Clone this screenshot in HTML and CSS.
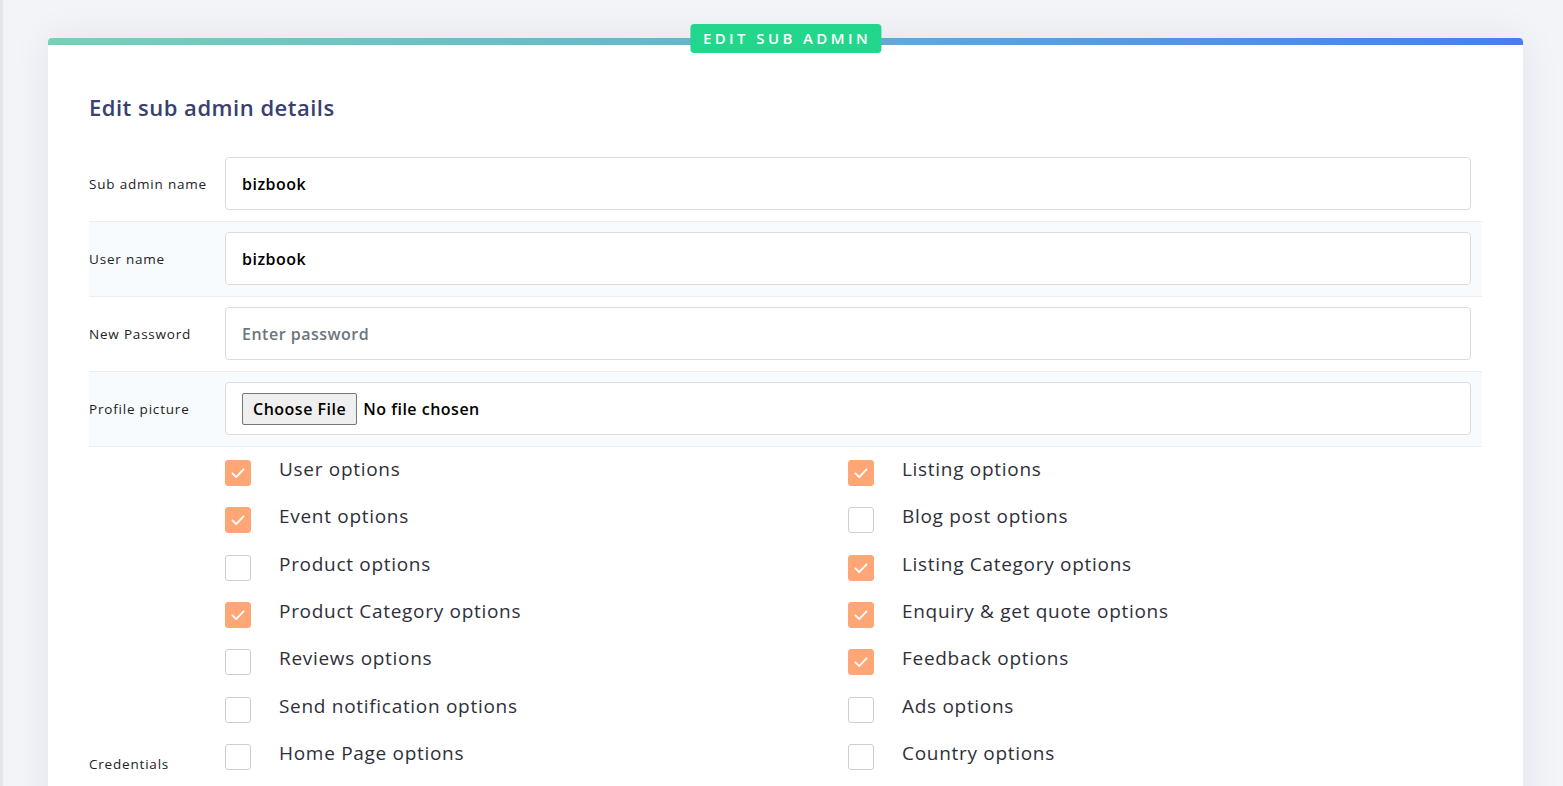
FILE: index.html
```html
<!DOCTYPE html>
<html lang="en">
<head>
<meta charset="utf-8">
<title>Edit sub admin</title>
<link rel="stylesheet" href="styles.css">
</head>
<body>
<div class="page">
  <div class="card">
    <div class="card-bar"></div>
    <span class="badge">EDIT SUB ADMIN</span>
    <div class="card-body">
      <h2 class="title">Edit sub admin details</h2>
      <div class="form">
        <div class="row">
          <div class="label">Sub admin name</div>
          <div class="field"><input class="input" type="text" value="bizbook"></div>
        </div>
        <div class="row alt">
          <div class="label">User name</div>
          <div class="field"><input class="input" type="text" value="bizbook"></div>
        </div>
        <div class="row">
          <div class="label">New Password</div>
          <div class="field"><input class="input" type="password" placeholder="Enter password"></div>
        </div>
        <div class="row alt">
          <div class="label">Profile picture</div>
          <div class="field"><div class="input file-box"><input class="file" type="file"></div></div>
        </div>
        <div class="row cred">
          <div class="label">Credentials</div>
          <div class="options">
            <div class="opt"><span class="box on"><svg viewBox="0 0 26 26"><path d="M7 13.5l4 4 8-8.5"/></svg></span><span class="opt-text">User options</span></div>
            <div class="opt"><span class="box on"><svg viewBox="0 0 26 26"><path d="M7 13.5l4 4 8-8.5"/></svg></span><span class="opt-text">Listing options</span></div>
            <div class="opt"><span class="box on"><svg viewBox="0 0 26 26"><path d="M7 13.5l4 4 8-8.5"/></svg></span><span class="opt-text">Event options</span></div>
            <div class="opt"><span class="box"></span><span class="opt-text">Blog post options</span></div>
            <div class="opt"><span class="box"></span><span class="opt-text">Product options</span></div>
            <div class="opt"><span class="box on"><svg viewBox="0 0 26 26"><path d="M7 13.5l4 4 8-8.5"/></svg></span><span class="opt-text">Listing Category options</span></div>
            <div class="opt"><span class="box on"><svg viewBox="0 0 26 26"><path d="M7 13.5l4 4 8-8.5"/></svg></span><span class="opt-text">Product Category options</span></div>
            <div class="opt"><span class="box on"><svg viewBox="0 0 26 26"><path d="M7 13.5l4 4 8-8.5"/></svg></span><span class="opt-text">Enquiry &amp; get quote options</span></div>
            <div class="opt"><span class="box"></span><span class="opt-text">Reviews options</span></div>
            <div class="opt"><span class="box on"><svg viewBox="0 0 26 26"><path d="M7 13.5l4 4 8-8.5"/></svg></span><span class="opt-text">Feedback options</span></div>
            <div class="opt"><span class="box"></span><span class="opt-text">Send notification options</span></div>
            <div class="opt"><span class="box"></span><span class="opt-text">Ads options</span></div>
            <div class="opt"><span class="box"></span><span class="opt-text">Home Page options</span></div>
            <div class="opt"><span class="box"></span><span class="opt-text">Country options</span></div>
            <div class="opt"><span class="box"></span><span class="opt-text">City options</span></div>
            <div class="opt"><span class="box"></span><span class="opt-text">Jobs options</span></div>
            <div class="opt"><span class="box"></span><span class="opt-text">Place options</span></div>
            <div class="opt"><span class="box"></span><span class="opt-text">News options</span></div>
            <div class="opt"><span class="box"></span><span class="opt-text">Expert options</span></div>
            <div class="opt"><span class="box"></span><span class="opt-text">Coupon options</span></div>
            <div class="opt"><span class="box"></span><span class="opt-text">Payment options</span></div>
            <div class="opt"><span class="box"></span><span class="opt-text">Setting options</span></div>
            <div class="opt"><span class="box"></span><span class="opt-text">Import options</span></div>
            <div class="opt"><span class="box"></span><span class="opt-text">Export options</span></div>
            <div class="opt"><span class="box"></span><span class="opt-text">Sub admin options</span></div>
            <div class="opt"><span class="box"></span><span class="opt-text">Promotion options</span></div>
          </div>
        </div>
      </div>
    </div>
  </div>
</div>
</body>
</html>
```

FILE: styles.css
```css
* { box-sizing: border-box; }

html, body {
  margin: 0;
  padding: 0;
}

body {
  background: #f3f4f8;
  font-family: "Open Sans", "Liberation Sans", sans-serif;
  color: #222;
}

.page {
  border-left: 3px solid #e4e4e9;
  padding: 38px 40px 40px 45px;
  min-height: 786px;
}

.card {
  position: relative;
  background: #fff;
  border-radius: 4px 4px 0 0;
  box-shadow: 0 0 40px rgba(30, 30, 70, 0.07);
}

.card-bar {
  height: 7px;
  border-radius: 4px 4px 0 0;
  background: linear-gradient(90deg, #7ecdb8 0%, #6aaed0 50%, #4a7cf0 100%);
}

.badge {
  position: absolute;
  top: -14px;
  left: 50%;
  transform: translateX(-50%);
  height: 29px;
  padding: 0 10px 0 13px;
  background: #22d68b;
  border-radius: 4px;
  color: #fff;
  font-size: 15px;
  font-weight: 600;
  letter-spacing: 3.4px;
  line-height: 29px;
  white-space: nowrap;
}

.card-body {
  padding: 47px 41px 40px 41px;
}

.title {
  margin: 0 0 25px 0;
  font-size: 22px;
  line-height: 30px;
  font-weight: 600;
  letter-spacing: 0.5px;
  color: #39406f;
}

.row {
  display: grid;
  grid-template-columns: 136px 1fr;
  align-items: center;
  padding: 10px 11px 11px 0;
  border-bottom: 1px solid #e9eef3;
}

.row.alt {
  background: #f8fbfe;
}

.label {
  font-size: 13.5px;
  letter-spacing: 0.8px;
  color: #222;
}

.input {
  display: block;
  width: 100%;
  height: 53px;
  border: 1px solid #dcdcdc;
  border-radius: 4px;
  padding: 0 16px;
  background: #fff;
  font-family: inherit;
  font-size: 16px;
  font-weight: 600;
  letter-spacing: 0.5px;
  color: #000;
  outline: none;
}

.input::placeholder {
  color: #6c757d;
  font-weight: 600;
}

.file-box {
  display: flex;
  align-items: center;
}

.file {
  font-family: inherit;
  font-size: 16px;
  font-weight: 600;
  letter-spacing: 0.5px;
  color: #000;
}

.file::file-selector-button {
  font-family: inherit;
  font-size: 16px;
  font-weight: 600;
  letter-spacing: 0.5px;
  height: 32px;
  padding: 0 10px;
  margin-right: 6px;
  background: #efefef;
  border: 1px solid #767676;
  border-radius: 2px;
  color: #000;
}

.row.cred {
  align-items: center;
  padding-top: 9px;
  padding-bottom: 11px;
  border-bottom: none;
}

.options {
  display: grid;
  grid-template-columns: 1fr 1fr;
  row-gap: 21.33px;
  padding-bottom: 22px;
}

.opt {
  display: flex;
  align-items: flex-start;
  gap: 28px;
  height: 26px;
}

.box {
  flex: none;
  width: 26px;
  height: 26px;
  margin-top: 4px;
  border: 1px solid #cfcfcf;
  border-radius: 3px;
  background: #fff;
}

.box.on {
  background: #ffa676;
  border-color: #ffa676;
}

.box svg {
  display: block;
  width: 24px;
  height: 24px;
  fill: none;
  stroke: #fff;
  stroke-width: 2;
  stroke-linecap: round;
  stroke-linejoin: round;
}

.opt-text {
  font-size: 19px;
  line-height: 26px;
  font-weight: 500;
  letter-spacing: 0.7px;
  color: #2f2f3a;
}
```
